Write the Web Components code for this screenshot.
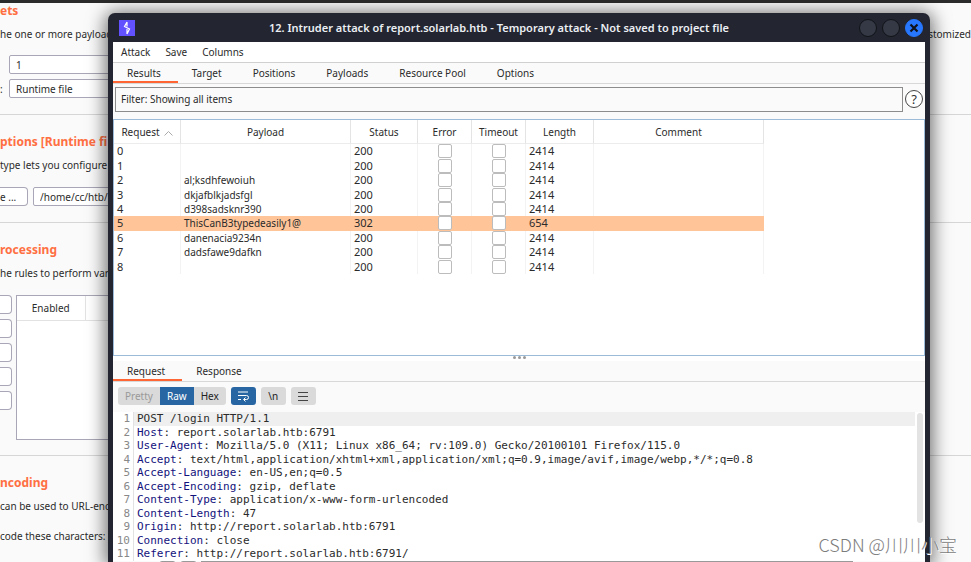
<!DOCTYPE html>
<html lang="en">
<head>
<meta charset="utf-8">
<title>Intruder attack</title>
<style>
body { margin: 0; height: 100vh; overflow: hidden; background: #fafafa; color: #2b2b2b; font: 10px/16px "Noto Sans", sans-serif; }
</style>
</head>
<body>
<payload-page></payload-page>
<attack-window>
  <window-bar slot="bar">12. Intruder attack of report.solarlab.htb - Temporary attack - Not saved to project file</window-bar>
  <menu-bar slot="menu"></menu-bar>
  <tab-row slot="tabs" tabs="Results,Target,Positions,Payloads,Resource Pool,Options"></tab-row>
  <filter-bar slot="filter">Filter: Showing all items</filter-bar>
  <results-table slot="results"></results-table>
  <message-editor slot="message"></message-editor>
</attack-window>
<water-mark>CSDN @川川小宝</water-mark>

<script>
function attach(el, html) {
  const template = document.createElement('template');
  template.innerHTML = html;
  el.attachShadow({ mode: 'open' }).appendChild(template.content.cloneNode(true));
  return el.shadowRoot;
}

class PayloadPage extends HTMLElement {
  constructor() {
    super();
    attach(this, `
<style>
:host { display: block; height: 100vh; box-sizing: border-box; border-top: 3px solid #2b2b2b; overflow: hidden; }
* { box-sizing: border-box; }
section { border-bottom: 1px solid #d6d6d6; overflow: hidden; white-space: nowrap; }
h2 { margin: 0; font: bold 12px/16px "Noto Sans", sans-serif; color: #ff6f42; }
p { margin: 0; }
.sets { height: 112px; }
.options { height: 108px; padding-top: 19px; }
.processing { height: 233px; padding-top: 19px; }
.encoding { height: 110px; padding-top: 19px; border: 0; }
h2 + p { margin-top: 7px; display: flex; justify-content: space-between; }
.field { display: grid; grid-template-columns: 9px 180px; height: 19px; margin-top: 5px; align-items: center; }
.sets .field:nth-of-type(1) { margin-top: 13px; }
input, select { height: 19px; font: inherit; color: inherit; background: #fff; border: 1px solid #a9a7b7; border-radius: 2px; padding: 0 6px; width: 180px; grid-column: 2; appearance: none; }
label { grid-column: 1; grid-row: 1; }
.file { display: flex; gap: 5px; margin-top: 14px; }
button { height: 19px; font: inherit; color: inherit; background: #fff; border: 1px solid #a9a7b7; border-left: 0; border-radius: 0 4px 4px 0; padding: 0; }
.file button { width: 28px; text-align: left; }
.rules { display: flex; gap: 4px; margin-top: 14px; }
.buttons { display: flex; flex-direction: column; gap: 5px; width: 12px; }
.list { width: 300px; height: 145px; background: #fff; border: 1px solid #a9a7b7; }
table { width: 100%; border-collapse: collapse; }
th { height: 24px; font-weight: normal; border-bottom: 1px solid #e2e2e2; padding: 0; }
th:first-child { width: 68px; border-right: 1px solid #e2e2e2; }
.chars { margin-top: 14px; }
</style>
<section class="sets">
  <h2>ets</h2>
  <p><span>he one or more payload</span><span>stomized</span></p>
  <div class="field"><input type="text" value="1" aria-label="Payload set"></div>
  <div class="field"><label for="type">:</label><select id="type"><option>Runtime file</option></select></div>
</section>
<section class="options">
  <h2>ptions [Runtime fi</h2>
  <p>type lets you configure</p>
  <div class="file"><button>e ...</button><input type="text" value="/home/cc/htb/" aria-label="Payload file"></div>
</section>
<section class="processing">
  <h2>rocessing</h2>
  <p>he rules to perform vari</p>
  <div class="rules">
    <div class="buttons">
      <button aria-label="Add"></button><button aria-label="Edit"></button><button aria-label="Remove"></button><button aria-label="Up"></button><button aria-label="Down"></button>
    </div>
    <div class="list"><table><tr><th>Enabled</th><th></th></tr></table></div>
  </div>
</section>
<section class="encoding">
  <h2>ncoding</h2>
  <p>can be used to URL-enc</p>
  <p class="chars">code these characters:</p>
</section>`);
  }
}

class AttackWindow extends HTMLElement {
  constructor() {
    super();
    attach(this, `
<style>
:host { display: flex; flex-direction: column; position: absolute; box-sizing: border-box; top: 13px; bottom: 0; left: 108px; right: 41px; padding: 0 5px; background: #232630; border-radius: 7px 7px 0 0; box-shadow: 0 2px 18px 3px rgba(0, 0, 0, .55); }
.body { flex: 1; min-height: 0; display: flex; flex-direction: column; background: #fafafa; overflow: hidden; }
</style>
<slot name="bar"></slot>
<div class="body">
  <slot name="menu"></slot>
  <slot name="tabs"></slot>
  <slot name="filter"></slot>
  <slot name="results"></slot>
  <slot name="message"></slot>
</div>`);
  }
}

class WindowBar extends HTMLElement {
  constructor() {
    super();
    attach(this, `
<style>
:host { display: grid; grid-template-columns: 50px 1fr 90px; align-items: center; height: 29px; flex: none; color: #eceff4; font: 600 11px/16px "Noto Sans", sans-serif; text-align: center; white-space: nowrap; }
svg { display: block; }
.logo { margin-left: 6px; }
.controls { display: flex; gap: 5px; justify-content: flex-end; padding-right: 2px; }
button { width: 18px; height: 18px; padding: 0; border: 1px solid #111319; border-radius: 50%; background: #353945; }
.close { background: #2777ff; border-color: #2777ff; }
</style>
<svg class="logo" width="16" height="16" viewBox="0 0 16 16"><path fill="#6151ff" d="M0 0h16v16H0z"/><path d="M8 2L5.500 6.500 10.500 9 8 14M8 2v4.500M8 9v5" fill="none" stroke="#fff" stroke-width="1.200"/></svg>
<div><slot></slot></div>
<div class="controls">
  <button aria-label="Minimize"></button>
  <button aria-label="Maximize"></button>
  <button class="close" aria-label="Close"><svg width="16" height="16" viewBox="0 0 16 16"><path d="M4.500 4.500l7 7m0-7l-7 7" stroke="#10131c" stroke-width="2.200"/></svg></button>
</div>`);
  }
}

class MenuBar extends HTMLElement {
  constructor() {
    super();
    attach(this, `
<style>
:host { display: flex; gap: 15px; height: 20px; flex: none; padding-left: 8px; background: #fff; border-bottom: 1px solid #d0d0d0; }
button { border: 0; padding: 0; background: none; font: inherit; color: inherit; }
</style>
<button>Attack</button><button>Save</button><button>Columns</button>`);
  }
}

class TabRow extends HTMLElement {
  connectedCallback() {
    const tabs = this.getAttribute('tabs').split(',');
    attach(this, `
<style>
:host { display: flex; height: 20px; flex: none; border-bottom: 1px solid #d8d8d8; }
button { border: 0; padding: 2px 17px 0 14px; background: none; font: inherit; color: inherit; border-bottom: 2px solid transparent; }
button:first-of-type { border-color: #ff6633; }
</style>
${tabs.map(t => `<button>${t}</button>`).join('')}`);
  }
}

class FilterBar extends HTMLElement {
  constructor() {
    super();
    attach(this, `
<style>
:host { display: flex; align-items: center; gap: 2px; height: 26px; flex: none; padding: 2px 2px 7px; }
.filter { flex: 1; height: 25px; box-sizing: border-box; border: 1px solid #8c8c8c; background: #fafafa; font: inherit; color: inherit; text-align: left; padding: 0 5px; }
.help { width: 18px; height: 18px; padding: 0; border: 1px solid #444; border-radius: 50%; background: #fff; font: 13px/16px "Noto Sans", sans-serif; color: #333; }
</style>
<button class="filter"><slot></slot></button><button class="help" aria-label="Help">?</button>`);
  }
}

const results = [
  [0, '', 200, 2414],
  [1, '', 200, 2414],
  [2, 'al;ksdhfewoiuh', 200, 2414],
  [3, 'dkjafblkjadsfgl', 200, 2414],
  [4, 'd398sadsknr390', 200, 2414],
  [5, 'ThisCanB3typedeasily1@', 302, 654],
  [6, 'danenacia9234n', 200, 2414],
  [7, 'dadsfawe9dafkn', 200, 2414],
  [8, '', 200, 2414],
];

class ResultsTable extends HTMLElement {
  constructor() {
    super();
    attach(this, `
<style>
:host { display: block; height: 235px; flex: none; background: #fff; border: 1px solid #9bbbd8; }
table { border-collapse: separate; border-spacing: 0; table-layout: fixed; width: 650px; height: 154px; }
th, td { font-weight: normal; padding: 0 3px; box-sizing: border-box; border-right: 1px solid #f3f3f3; text-align: left; line-height: 14px; white-space: nowrap; }
th { height: 24px; text-align: center; border-color: #e4e4e4; border-bottom: 1px solid #ececec; }
.num { font-size: 11px; }
.selected td { background: #ffc599; border-color: #ffc599; }
input { appearance: none; display: block; box-sizing: border-box; width: 14px; height: 14px; margin: 0 auto; border: 1px solid #bcbcbc; border-radius: 2px; background: #fff; }
th svg { margin-left: 4px; }
</style>
<table>
  <colgroup><col style="width: 67px"><col style="width: 170px"><col style="width: 67px"><col style="width: 54px"><col style="width: 54px"><col style="width: 68px"><col></colgroup>
  <thead><tr><th>Request<svg width="9" height="6" viewBox="0 0 9 6"><path d="M.5 5.500l4-4 4 4" fill="none" stroke="#aaa"/></svg></th><th>Payload</th><th>Status</th><th>Error</th><th>Timeout</th><th>Length</th><th>Comment</th></tr></thead>
  <tbody>
  ${results.map(([n, payload, status, length]) => `<tr class="${n === 5 ? 'selected' : ''}"><td class="num">${n}</td><td>${payload}</td><td class="num">${status}</td>
    <td><input type="checkbox" aria-label="Error ${n}"></td><td><input type="checkbox" aria-label="Timeout ${n}"></td>
    <td class="num">${length}</td><td></td></tr>`).join('')}
  </tbody>
</table>`);
  }
}

const lines = [
  ['', 'POST /login HTTP/1.1'],
  ['Host', ': report.solarlab.htb:6791'],
  ['User-Agent', ': Mozilla/5.0 (X11; Linux x86_64; rv:109.0) Gecko/20100101 Firefox/115.0'],
  ['Accept', ': text/html,application/xhtml+xml,application/xml;q=0.9,image/avif,image/webp,*/*;q=0.8'],
  ['Accept-Language', ': en-US,en;q=0.5'],
  ['Accept-Encoding', ': gzip, deflate'],
  ['Content-Type', ': application/x-www-form-urlencoded'],
  ['Content-Length', ': 47'],
  ['Origin', ': http://report.solarlab.htb:6791'],
  ['Connection', ': close'],
  ['Referer', ': http://report.solarlab.htb:6791/'],
];

class MessageEditor extends HTMLElement {
  constructor() {
    super();
    attach(this, `
<style>
:host { display: flex; flex-direction: column; flex: 1; min-height: 0; }
.grip { display: flex; gap: 2px; justify-content: center; height: 5px; background: #fff; }
.grip i { width: 3px; height: 3px; border-radius: 50%; background: #999; }
.tools { display: flex; align-items: center; gap: 5px; height: 28px; flex: none; padding: 0 0 2px 5px; }
.tools button { height: 18px; min-width: 25px; padding: 0 6px; border: 0; background: #dadada; color: #222; font: inherit; border-radius: 3px; display: grid; place-items: center; }
.modes { display: flex; }
.tools .modes button { border-radius: 0; padding: 0 7px; }
.tools .modes button:first-child { border-radius: 3px 0 0 3px; }
.tools .modes button:last-child { border-radius: 0 3px 3px 0; }
.tools .on { background: #2766a3; color: #fff; }
.tools button:disabled { color: #999; }
.code { flex: 1; min-height: 0; display: flex; background: #fff; font: 11px/13px "DejaVu Sans Mono", monospace; }
ol { flex: 1; margin: 0; padding: 0; list-style: none; display: grid; grid-auto-rows: 1fr; }
li { display: grid; grid-template-columns: 17px 1fr; column-gap: 3px; white-space: pre; }
li > span { color: #888; text-align: right; }
li > div { padding-left: 3px; border-left: 1px solid #e2e2e2; }
li:first-child > div { background: #efefef; }
b { font-weight: normal; color: #12127d; }
.scroll { width: 6px; height: 110px; margin: 1px 2px; border-radius: 3px; background: #e3e3e3; }
.find { display: flex; gap: 4px; height: 1px; flex: none; padding-left: 46px; box-sizing: border-box; overflow: hidden; }
.find button { width: 17px; height: 18px; border: 1px solid #999; border-radius: 3px; background: #eee; padding: 0; flex: none; }
.find input { flex: 1; height: 18px; margin-right: 72px; border: 1px solid #999; background: #fff; box-sizing: border-box; }
</style>
<div class="grip"><i></i><i></i><i></i></div>
<tab-row tabs="Request,Response"></tab-row>
<div class="tools">
  <div class="modes"><button disabled>Pretty</button><button class="on">Raw</button><button>Hex</button></div>
  <button class="on" aria-label="Wrap lines"><svg width="12" height="12" viewBox="0 0 12 12"><path d="M1 2h10M1 5.500h8.500a2 2 0 0 1 0 4H7M1 9.500h3M8.500 7.500l-2 2 2 2" fill="none" stroke="#fff"/></svg></button>
  <button>\\n</button>
  <button aria-label="Menu"><svg width="12" height="12" viewBox="0 0 12 12"><path d="M1 2.500h10M1 6.500h10M1 10.500h10" stroke="#444"/></svg></button>
</div>
<div class="code">
  <ol>${lines.map(([name, rest], i) => `<li><span>${i + 1}</span><div><b>${name}</b>${rest}</div></li>`).join('')}</ol>
  <div class="scroll"></div>
</div>
<div class="find"><button aria-label="Search options"></button><button aria-label="Previous match"></button><input type="text" aria-label="Search"></div>`);
  }
}

class WaterMark extends HTMLElement {
  constructor() {
    super();
    attach(this, `
<style>
:host { position: absolute; right: 14px; bottom: 6px; font: 300 18px/24px "Noto Sans CJK SC", sans-serif; color: #7c7c7c; text-shadow: 1px 1px 0 #fff; }
</style>
<slot></slot>`);
  }
}

customElements.define('payload-page', PayloadPage);
customElements.define('attack-window', AttackWindow);
customElements.define('window-bar', WindowBar);
customElements.define('menu-bar', MenuBar);
customElements.define('tab-row', TabRow);
customElements.define('filter-bar', FilterBar);
customElements.define('results-table', ResultsTable);
customElements.define('message-editor', MessageEditor);
customElements.define('water-mark', WaterMark);
</script>
</body>
</html>
